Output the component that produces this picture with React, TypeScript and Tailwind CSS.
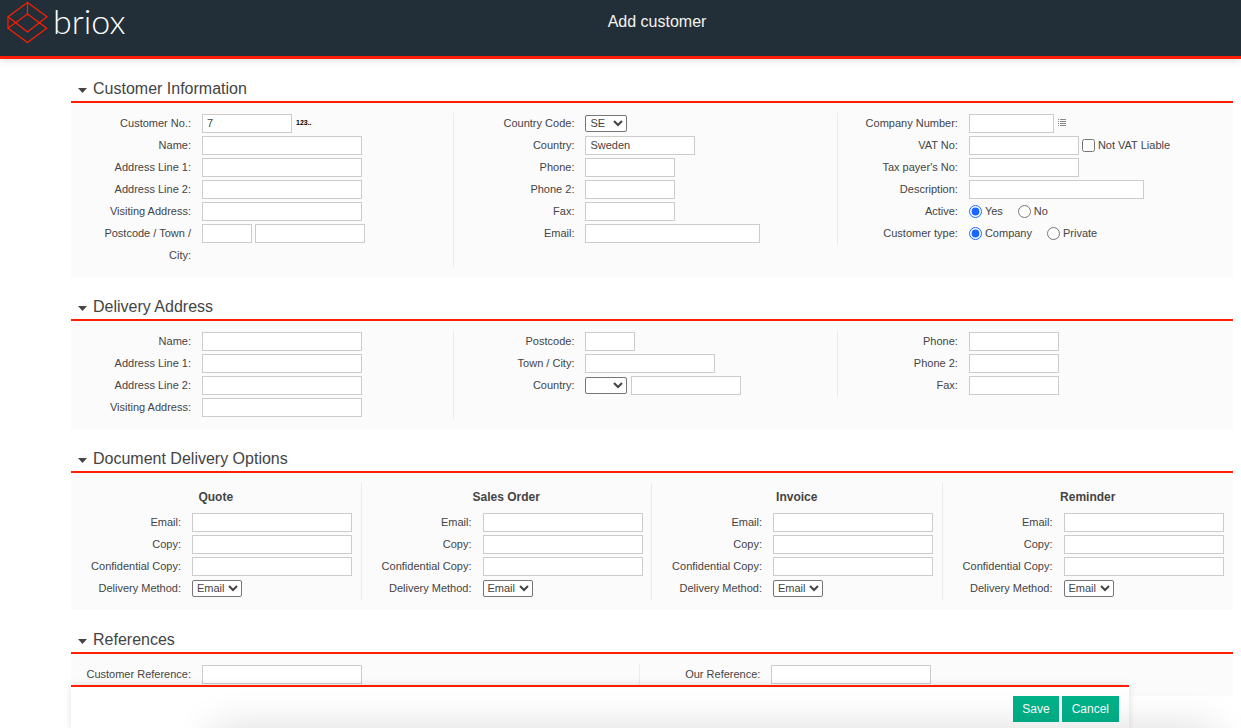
import React, { useId, useState } from "react";

interface FieldProps {
  label: string;
  labelWidth?: string;
  children: (id: string) => React.ReactNode;
}

const Field: React.FC<FieldProps> = ({
  label,
  labelWidth = "w-[120px]",
  children,
}) => {
  const id = useId();

  return (
    <div className="flex min-h-[22px] items-start gap-[11px]">
      <label
        htmlFor={id}
        className={`${labelWidth} -mt-px shrink-0 pl-2.5 text-right leading-[22px]`}
      >
        {label}
      </label>
      <div className="flex h-[21px] items-center">{children(id)}</div>
    </div>
  );
};

interface InputProps extends React.InputHTMLAttributes<HTMLInputElement> {
  width?: string;
}

const TextInput: React.FC<InputProps> = ({ width = "w-[160px]", ...props }) => (
  <input
    type="text"
    className={`${width} h-[19px] border border-[#ccc] bg-white px-1 pb-px text-[11px] text-[#444] focus:border-[#888] focus:outline-none`}
    {...props}
  />
);

interface SelectProps extends React.SelectHTMLAttributes<HTMLSelectElement> {
  options: string[];
  width?: string;
}

const Select: React.FC<SelectProps> = ({
  options,
  width = "w-[42px]",
  ...props
}) => (
  <select
    className={`${width} h-[17px] rounded-xs border border-[#767676] bg-white pb-px text-[11px] text-[#444]`}
    {...props}
  >
    {options.map((option) => (
      <option key={option}>{option}</option>
    ))}
  </select>
);

interface RadioFieldProps {
  label: string;
  name: string;
  options: string[];
}

const RadioField: React.FC<RadioFieldProps> = ({ label, name, options }) => {
  const id = useId();

  return (
    <div
      role="radiogroup"
      aria-labelledby={id}
      className="flex h-[22px] items-start gap-[11px]"
    >
      <span
        id={id}
        className="-mt-px w-[120px] shrink-0 pl-2.5 text-right leading-[22px]"
      >
        {label}
      </span>
      <div className="flex h-[21px] items-center gap-[15px]">
        {options.map((option, i) => (
          <label key={option} className="flex items-center gap-[3px]">
            <input
              type="radio"
              name={name}
              value={option}
              defaultChecked={i === 0}
              className="size-[13px] accent-[#1a66ff]"
            />
            {option}
          </label>
        ))}
      </div>
    </div>
  );
};

interface SectionProps {
  title: string;
  children: React.ReactNode;
}

const Section: React.FC<SectionProps> = ({ title, children }) => {
  const [open, setOpen] = useState(true);

  return (
    <section>
      <h2 className="border-b-2 border-[#ff1e00] pt-[18px] pl-[7px]">
        <button
          type="button"
          aria-expanded={open}
          onClick={() => setOpen(!open)}
          className="flex items-center gap-1.5 text-base leading-6"
        >
          <svg width="9" height="5" viewBox="0 0 9 5" className="mt-0.5">
            <path d="M0 0h9L4.500 5z" fill="currentColor" />
          </svg>
          {title}
        </button>
      </h2>
      {open && (
        <div className="flex items-start bg-[#fbfbfb] py-2.5">{children}</div>
      )}
    </section>
  );
};

const Column: React.FC<{ width: string; children: React.ReactNode }> = ({
  width,
  children,
}) => (
  <div
    className={`${width} shrink-0 border-r border-[#ebebeb] last:border-r-0`}
  >
    {children}
  </div>
);

const Logo: React.FC = () => (
  <a
    href="#"
    aria-label="briox"
    className="flex w-[73px] items-start gap-[5px] pl-[7px] whitespace-nowrap"
  >
    <svg
      width="41"
      height="45"
      viewBox="0 0 41 45"
      fill="none"
      stroke="#ff1e00"
      strokeWidth="1.2"
      className="shrink-0"
    >
      <path d="M20.500 2.400 40 16.700 20.500 32 1 16.700z" />
      <path d="M20.500 14 39.700 28.300 20.500 42.600 1 28.300z" />
      <path d="M1 16.700v11.600M20.500 2.400V14" />
    </svg>
    <span className="font-[Lato,sans-serif] text-[34px] leading-[42px] font-light text-white">
      briox
    </span>
  </a>
);

const documents = ["Quote", "Sales Order", "Invoice", "Reminder"];

const App: React.FC = () => {
  return (
    <div className="min-h-screen bg-white font-['Liberation_Sans',Arial,sans-serif] text-[11px] text-[#444]">
      <header className="flex h-[59px] items-start border-b-3 border-[#ff1e00] bg-[#222f38] shadow-[0_1px_8px_rgba(0,0,0,0.15)]">
        <Logo />
        <h1 className="flex-1 pt-2.5 text-center text-base leading-6 text-[#f4f4f0]">
          Add customer
        </h1>
      </header>

      <main className="pr-2 pb-8 pl-[71px]">
        <Section title="Customer Information">
          <Column width="w-[33%]">
            <Field label="Customer No.:">
              {(id) => (
                <>
                  <TextInput id={id} width="w-[90px]" defaultValue="7" />
                  <button
                    type="button"
                    title="Next number"
                    className="ml-1 text-[7px] font-bold text-black"
                  >
                    123..
                  </button>
                </>
              )}
            </Field>
            <Field label="Name:">{(id) => <TextInput id={id} />}</Field>
            <Field label="Address Line 1:">
              {(id) => <TextInput id={id} />}
            </Field>
            <Field label="Address Line 2:">
              {(id) => <TextInput id={id} />}
            </Field>
            <Field label="Visiting Address:">
              {(id) => <TextInput id={id} />}
            </Field>
            <Field label="Postcode / Town / City:">
              {(id) => (
                <div className="flex gap-[3px]">
                  <TextInput id={id} width="w-[50px]" />
                  <TextInput width="w-[110px]" aria-label="Town / City" />
                </div>
              )}
            </Field>
            <div className="h-px" />
          </Column>

          <Column width="w-[33%]">
            <Field label="Country Code:">
              {(id) => <Select id={id} options={["SE", "NO", "FI", "DK"]} />}
            </Field>
            <Field label="Country:">
              {(id) => (
                <TextInput id={id} width="w-[110px]" defaultValue="Sweden" />
              )}
            </Field>
            <Field label="Phone:">
              {(id) => <TextInput id={id} width="w-[90px]" />}
            </Field>
            <Field label="Phone 2:">
              {(id) => <TextInput id={id} width="w-[90px]" />}
            </Field>
            <Field label="Fax:">
              {(id) => <TextInput id={id} width="w-[90px]" />}
            </Field>
            <Field label="Email:">
              {(id) => <TextInput id={id} width="w-[175px]" />}
            </Field>
          </Column>

          <Column width="w-[34%]">
            <Field label="Company Number:">
              {(id) => (
                <>
                  <TextInput id={id} width="w-[85px]" />
                  <button
                    type="button"
                    aria-label="Look up company"
                    className="mb-0.5 ml-1"
                  >
                    <svg width="8" height="7" viewBox="0 0 8 7" fill="#888">
                      <path d="M0 0h1v1H0zM2 0h6v1H2zM0 2h1v1H0zM2 2h6v1H2zM0 4h1v1H0zM2 4h6v1H2zM0 6h1v1H0zM2 6h6v1H2z" />
                    </svg>
                  </button>
                </>
              )}
            </Field>
            <Field label="VAT No:">
              {(id) => (
                <div className="flex items-center gap-[3px]">
                  <TextInput id={id} width="w-[110px]" />
                  <label className="flex items-center gap-[3px]">
                    <input type="checkbox" className="size-[13px]" />
                    Not VAT Liable
                  </label>
                </div>
              )}
            </Field>
            <Field label="Tax payer's No:">
              {(id) => <TextInput id={id} width="w-[110px]" />}
            </Field>
            <Field label="Description:">
              {(id) => <TextInput id={id} width="w-[175px]" />}
            </Field>
            <RadioField label="Active:" name="active" options={["Yes", "No"]} />
            <RadioField
              label="Customer type:"
              name="customerType"
              options={["Company", "Private"]}
            />
          </Column>
        </Section>

        <Section title="Delivery Address">
          <Column width="w-[33%]">
            <Field label="Name:">{(id) => <TextInput id={id} />}</Field>
            <Field label="Address Line 1:">
              {(id) => <TextInput id={id} />}
            </Field>
            <Field label="Address Line 2:">
              {(id) => <TextInput id={id} />}
            </Field>
            <Field label="Visiting Address:">
              {(id) => <TextInput id={id} />}
            </Field>
          </Column>
          <Column width="w-[33%]">
            <Field label="Postcode:">
              {(id) => <TextInput id={id} width="w-[50px]" />}
            </Field>
            <Field label="Town / City:">
              {(id) => <TextInput id={id} width="w-[130px]" />}
            </Field>
            <Field label="Country:">
              {(id) => (
                <div className="flex items-center gap-1">
                  <Select id={id} options={["", "SE", "NO", "FI", "DK"]} />
                  <TextInput width="w-[110px]" aria-label="Country name" />
                </div>
              )}
            </Field>
          </Column>
          <Column width="w-[34%]">
            <Field label="Phone:">
              {(id) => <TextInput id={id} width="w-[90px]" />}
            </Field>
            <Field label="Phone 2:">
              {(id) => <TextInput id={id} width="w-[90px]" />}
            </Field>
            <Field label="Fax:">
              {(id) => <TextInput id={id} width="w-[90px]" />}
            </Field>
          </Column>
        </Section>

        <Section title="Document Delivery Options">
          {documents.map((name) => (
            <Column key={name} width="w-1/4">
              <h3 className="text-center text-xs leading-[29px] font-bold">
                {name}
              </h3>
              <Field label="Email:" labelWidth="w-[110px]">
                {(id) => <TextInput id={id} />}
              </Field>
              <Field label="Copy:" labelWidth="w-[110px]">
                {(id) => <TextInput id={id} />}
              </Field>
              <Field label="Confidential Copy:" labelWidth="w-[110px]">
                {(id) => <TextInput id={id} />}
              </Field>
              <Field label="Delivery Method:" labelWidth="w-[110px]">
                {(id) => (
                  <Select
                    id={id}
                    width="w-[50px]"
                    options={["Email", "Print"]}
                  />
                )}
              </Field>
            </Column>
          ))}
        </Section>

        <Section title="References">
          <Column width="w-[49%]">
            <Field label="Customer Reference:">
              {(id) => <TextInput id={id} />}
            </Field>
          </Column>
          <Column width="w-[51%]">
            <Field label="Our Reference:">
              {(id) => <TextInput id={id} />}
            </Field>
          </Column>
        </Section>
      </main>

      {/* Action bar */}
      <div className="fixed right-[112px] bottom-0 left-[71px] flex h-[43px] items-start justify-end gap-[3px] border-t-2 border-[#ff1e00] bg-white pt-[9px] pr-2.5 text-xs text-white shadow-[0_0_8px_rgba(0,0,0,0.12)]">
        <button type="button" className="h-[26px] bg-[#00b289] px-[9px]">
          Save
        </button>
        <button type="button" className="h-[26px] bg-[#00b289] px-2.5">
          Cancel
        </button>
      </div>

      {/* Soft shade along the bottom edge */}
      <div className="pointer-events-none fixed right-[26px] -bottom-20 left-[213px] h-20 shadow-[0_0_40px_rgba(0,0,0,0.14)]" />
    </div>
  );
};

export default App;
